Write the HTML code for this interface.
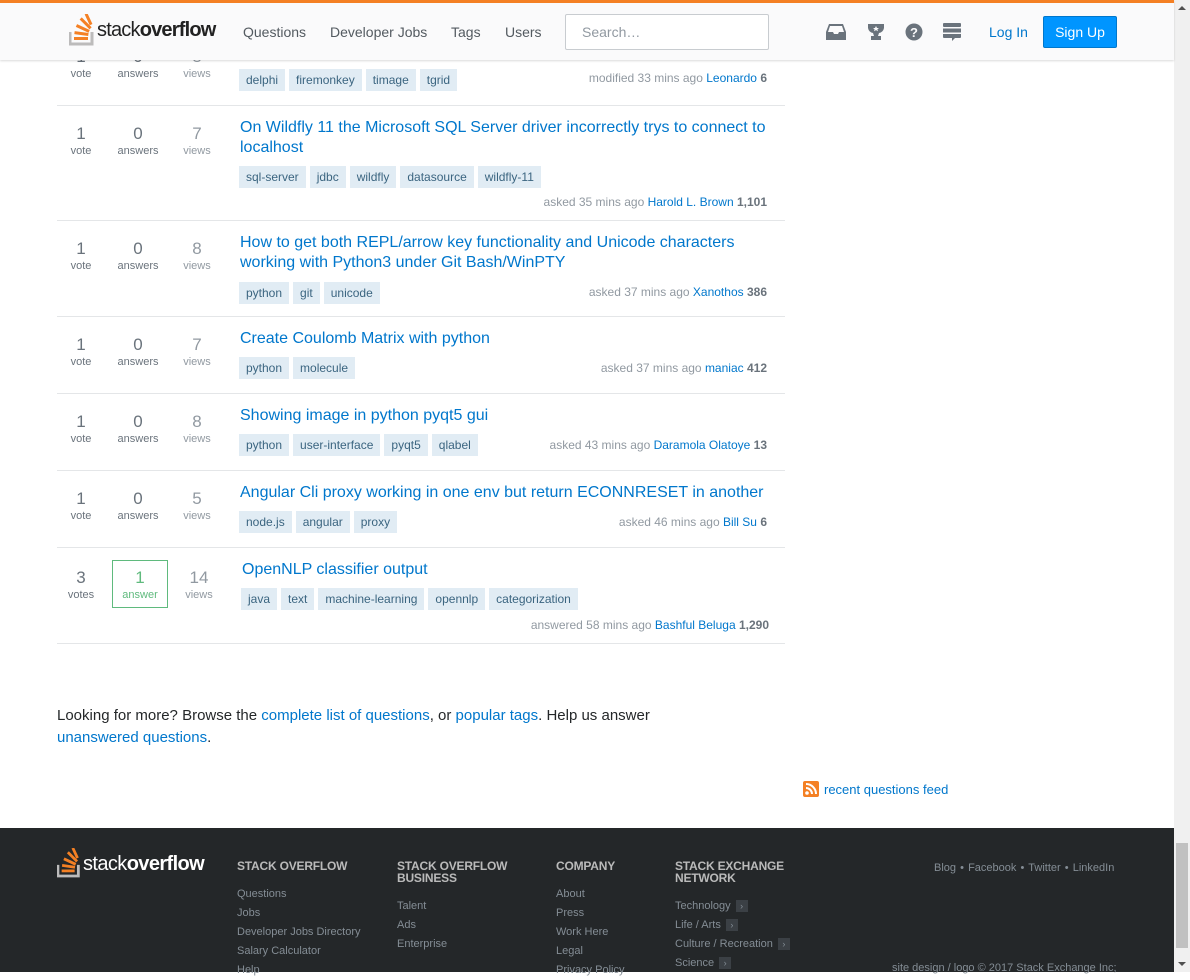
<!DOCTYPE html>
<html><head><meta charset="utf-8">
<style>
*{box-sizing:border-box;margin:0;padding:0}
body{width:1190px;height:972px;overflow:hidden;position:relative;background:#fff;font-family:"Liberation Sans",Arial,sans-serif;color:#242729}
a{color:#0077cc;text-decoration:none}
.abs{position:absolute}
.hdr{position:absolute;left:0;top:0;width:1174px;height:60px;background:#fafafb;border-top:3px solid #f48024;box-shadow:0 1px 2px rgba(0,0,0,.15);z-index:5}
.nav{position:absolute;top:21px;font-size:14px;color:#535a60}
.sb{position:absolute;right:0;top:0;width:16px;height:972px;background:#f0f0f0}
.row{position:absolute;left:57px;width:728px;border-bottom:1px solid #e4e6e8}
.st{position:absolute;text-align:center;width:60px}
.st .n{font-size:17px;color:#6a737c;line-height:20px}
.st .l{font-size:11px;color:#6a737c;line-height:14px}
.st.v .n,.st.v .l{color:#9199a1}
.t{position:absolute;left:183px;width:545px;font-size:16px;line-height:20px;color:#0077cc}
.tags{position:absolute;left:182px;height:22px;white-space:nowrap}
.tag{display:inline-block;height:22px;line-height:22px;padding:0 7px;margin-right:4px;background:#e1ecf4;color:#3b6580;font-size:12px}
.m{position:absolute;right:18px;font-size:12px;color:#9199a1;line-height:16px;white-space:nowrap}
.m b{color:#6a737c}
.foot{position:absolute;left:0;top:828px;width:1174px;height:144px;background:#242729}
.fh{position:absolute;font-size:12px;font-weight:bold;color:#bababa;line-height:12px;letter-spacing:-.2px}
.fl{position:absolute;font-size:11px;color:#848d95;line-height:19px}
.chev{display:inline-block;width:12px;height:12px;background:#3b4045;color:#848d95;font-size:9px;line-height:12px;text-align:center;margin-left:5px;vertical-align:middle}
</style></head><body>

<div class="row" style="top:30px;height:76px">
  <div class="st" style="left:-6px;top:17px"><div class="n">1</div><div class="l">vote</div></div>
  <div class="st" style="left:51px;top:17px"><div class="n">0</div><div class="l">answers</div></div>
  <div class="st v" style="left:110px;top:17px"><div class="n">8</div><div class="l">views</div></div>
  <div class="tags" style="top:39px"><span class="tag">delphi</span><span class="tag">firemonkey</span><span class="tag">timage</span><span class="tag">tgrid</span></div>
  <div class="m" style="top:40px">modified 33 mins ago <a>Leonardo</a> <b>6</b></div>
</div>

<div class="row" style="top:105px;height:116px">
  <div class="st" style="left:-6px;top:19px"><div class="n">1</div><div class="l">vote</div></div>
  <div class="st" style="left:51px;top:19px"><div class="n">0</div><div class="l">answers</div></div>
  <div class="st v" style="left:110px;top:19px"><div class="n">7</div><div class="l">views</div></div>
  <div class="t" style="top:13px">On Wildfly 11 the Microsoft SQL Server driver incorrectly trys to connect to localhost</div>
  <div class="tags" style="top:61px"><span class="tag">sql-server</span><span class="tag">jdbc</span><span class="tag">wildfly</span><span class="tag">datasource</span><span class="tag">wildfly-11</span></div>
  <div class="m" style="top:89px">asked 35 mins ago <a>Harold L. Brown</a> <b>1,101</b></div>
</div>

<div class="row" style="top:220px;height:97px">
  <div class="st" style="left:-6px;top:19px"><div class="n">1</div><div class="l">vote</div></div>
  <div class="st" style="left:51px;top:19px"><div class="n">0</div><div class="l">answers</div></div>
  <div class="st v" style="left:110px;top:19px"><div class="n">8</div><div class="l">views</div></div>
  <div class="t" style="top:13px">How to get both REPL/arrow key functionality and Unicode characters working with Python3 under Git Bash/WinPTY</div>
  <div class="tags" style="top:62px"><span class="tag">python</span><span class="tag">git</span><span class="tag">unicode</span></div>
  <div class="m" style="top:64px">asked 37 mins ago <a>Xanothos</a> <b>386</b></div>
</div>

<div class="row" style="top:316px;height:78px">
  <div class="st" style="left:-6px;top:19px"><div class="n">1</div><div class="l">vote</div></div>
  <div class="st" style="left:51px;top:19px"><div class="n">0</div><div class="l">answers</div></div>
  <div class="st v" style="left:110px;top:19px"><div class="n">7</div><div class="l">views</div></div>
  <div class="t" style="top:13px">Create Coulomb Matrix with python</div>
  <div class="tags" style="top:41px"><span class="tag">python</span><span class="tag">molecule</span></div>
  <div class="m" style="top:44px">asked 37 mins ago <a>maniac</a> <b>412</b></div>
</div>

<div class="row" style="top:393px;height:78px">
  <div class="st" style="left:-6px;top:19px"><div class="n">1</div><div class="l">vote</div></div>
  <div class="st" style="left:51px;top:19px"><div class="n">0</div><div class="l">answers</div></div>
  <div class="st v" style="left:110px;top:19px"><div class="n">8</div><div class="l">views</div></div>
  <div class="t" style="top:13px">Showing image in python pyqt5 gui</div>
  <div class="tags" style="top:41px"><span class="tag">python</span><span class="tag">user-interface</span><span class="tag">pyqt5</span><span class="tag">qlabel</span></div>
  <div class="m" style="top:44px">asked 43 mins ago <a>Daramola Olatoye</a> <b>13</b></div>
</div>

<div class="row" style="top:470px;height:78px">
  <div class="st" style="left:-6px;top:19px"><div class="n">1</div><div class="l">vote</div></div>
  <div class="st" style="left:51px;top:19px"><div class="n">0</div><div class="l">answers</div></div>
  <div class="st v" style="left:110px;top:19px"><div class="n">5</div><div class="l">views</div></div>
  <div class="t" style="top:13px">Angular Cli proxy working in one env but return ECONNRESET in another</div>
  <div class="tags" style="top:41px"><span class="tag">node.js</span><span class="tag">angular</span><span class="tag">proxy</span></div>
  <div class="m" style="top:44px">asked 46 mins ago <a>Bill Su</a> <b>6</b></div>
</div>

<div class="row" style="top:547px;height:97px">
  <div class="st" style="left:-6px;top:21px"><div class="n">3</div><div class="l">votes</div></div>
  <div class="st" style="left:55px;top:13px;width:56px;height:48px;border:1px solid #5fba7d;padding-top:7px"><div class="n" style="color:#5fba7d">1</div><div class="l" style="color:#5fba7d">answer</div></div>
  <div class="st v" style="left:112px;top:21px"><div class="n">14</div><div class="l">views</div></div>
  <div class="t" style="top:13px;left:185px">OpenNLP classifier output</div>
  <div class="tags" style="top:41px;left:184px"><span class="tag">java</span><span class="tag">text</span><span class="tag">machine-learning</span><span class="tag">opennlp</span><span class="tag">categorization</span></div>
  <div class="m" style="top:70px;right:16px">answered 58 mins ago <a>Bashful Beluga</a> <b>1,290</b></div>
</div>

<div class="abs" style="left:57px;top:705px;width:640px;font-size:15px;line-height:22px">Looking for more? Browse the <a>complete list of questions</a>, or <a>popular tags</a>. Help us answer <a>unanswered questions</a>.</div>

<div class="abs" style="left:803px;top:781px;width:16px;height:16px;background:#f48024;border-radius:2px">
<svg width="16" height="16" viewBox="0 0 16 16"><circle cx="4" cy="12" r="1.8" fill="#fff"/><path d="M3 7a6 6 0 0 1 6 6M3 3a10 10 0 0 1 10 10" stroke="#fff" stroke-width="2" fill="none"/></svg></div>
<a class="abs" style="left:824px;top:782px;font-size:13px">recent questions feed</a>

<div class="hdr">
  <svg class="abs" style="left:69px;top:11px" width="28" height="32" viewBox="0 0 28 32">
    <path d="M1 18v12h22V18" stroke="#bcbbbb" stroke-width="3" fill="none"/>
    <g fill="#f48024"><rect x="5" y="23" width="14" height="3"/><rect x="5.5" y="18" width="14" height="3" transform="rotate(8 12 19)"/><rect x="7" y="13" width="14" height="3" transform="rotate(25 14 14)"/><rect x="10" y="8" width="14" height="3" transform="rotate(45 17 9)"/><rect x="14" y="4" width="12" height="3" transform="rotate(65 20 5)"/></g>
  </svg>
  <div class="abs" style="left:97px;top:16px;font-size:20px;color:#222;letter-spacing:-.8px">stack<b>overflow</b></div>
  <div class="nav" style="left:243px">Questions</div>
  <div class="nav" style="left:330px">Developer Jobs</div>
  <div class="nav" style="left:451px">Tags</div>
  <div class="nav" style="left:505px">Users</div>
  <div class="abs" style="left:565px;top:11px;width:204px;height:36px;border:1px solid #c8ccd0;border-radius:2px;background:#fff;font-size:14px;color:#9199a1;padding:9px 0 0 16px">Search…</div>
  <svg class="abs" style="left:826px;top:20px" width="20" height="18" viewBox="0 0 20 18"><path d="M3 1h14l3 8v8H0V9z" fill="#6a737c"/><path d="M4 3h12l2 6h-5l-1 2H8L7 9H2z" fill="#fafafb"/></svg>
  <svg class="abs" style="left:866px;top:20px" width="20" height="18" viewBox="0 0 20 18"><path d="M2 1h16v4a6 6 0 0 1-5 5l-1 3h3v4H5v-4h3l-1-3a6 6 0 0 1-5-5z" fill="#6a737c"/><path d="M10 3l1 2h2l-1.6 1.3.6 2-2-1.2-2 1.2.6-2L7 5h2z" fill="#fafafb"/></svg>
  <svg class="abs" style="left:905px;top:20px" width="18" height="18" viewBox="0 0 18 18"><circle cx="9" cy="9" r="8.5" fill="#6a737c"/><text x="9" y="14" text-anchor="middle" font-size="13" font-weight="bold" fill="#fafafb" font-family="Liberation Sans">?</text></svg>
  <svg class="abs" style="left:943px;top:20px" width="18" height="20" viewBox="0 0 18 20"><rect x="0" y="0" width="18" height="4" rx="1" fill="#6a737c"/><rect x="0" y="5.5" width="18" height="4" fill="#6a737c"/><path d="M0 11h18v3a1 1 0 0 1-1 1h-5l-3 3v-3H1a1 1 0 0 1-1-1z" fill="#6a737c"/></svg>
  <a class="abs" style="left:989px;top:21px;font-size:14px">Log In</a>
  <div class="abs" style="left:1043px;top:13px;width:74px;height:32px;background:#0095ff;border:1px solid #07c;border-radius:2px;color:#fff;font-size:14px;text-align:center;line-height:30px">Sign Up</div>
</div>

<div class="foot">
  <svg class="abs" style="left:57px;top:20px" width="26" height="30" viewBox="0 0 28 32">
    <path d="M1 18v12h22V18" stroke="#bcbbbb" stroke-width="3" fill="none"/>
    <g fill="#f48024"><rect x="5" y="23" width="14" height="3"/><rect x="5.5" y="18" width="14" height="3" transform="rotate(8 12 19)"/><rect x="7" y="13" width="14" height="3" transform="rotate(25 14 14)"/><rect x="10" y="8" width="14" height="3" transform="rotate(45 17 9)"/><rect x="14" y="4" width="12" height="3" transform="rotate(65 20 5)"/></g>
  </svg>
  <div class="abs" style="left:83px;top:25px;font-size:20px;color:#fff;letter-spacing:-.6px">stack<b>overflow</b></div>
  <div class="fh" style="left:237px;top:32px">STACK OVERFLOW</div>
  <div class="fl" style="left:237px;top:57px">Questions<br>Jobs<br>Developer Jobs Directory<br>Salary Calculator<br>Help</div>
  <div class="fh" style="left:397px;top:32px">STACK OVERFLOW<br>BUSINESS</div>
  <div class="fl" style="left:397px;top:69px">Talent<br>Ads<br>Enterprise</div>
  <div class="fh" style="left:556px;top:32px">COMPANY</div>
  <div class="fl" style="left:556px;top:57px">About<br>Press<br>Work Here<br>Legal<br>Privacy Policy</div>
  <div class="fh" style="left:675px;top:32px">STACK EXCHANGE<br>NETWORK</div>
  <div class="fl" style="left:675px;top:69px">Technology<span class="chev">›</span><br>Life / Arts<span class="chev">›</span><br>Culture / Recreation<span class="chev">›</span><br>Science<span class="chev">›</span></div>
  <div class="abs" style="left:934px;top:34px;font-size:11px;color:#848d95;word-spacing:-1px">Blog &nbsp;•&nbsp; Facebook &nbsp;•&nbsp; Twitter &nbsp;•&nbsp; LinkedIn</div>
  <div class="abs" style="left:892px;top:134px;font-size:11px;color:#848d95">site design / logo © 2017 Stack Exchange Inc;</div>
</div>

<div class="sb">
  <div class="abs" style="left:4px;top:6px;width:0;height:0;border-left:4px solid transparent;border-right:4px solid transparent;border-bottom:4px solid #505050"></div>
  <div class="abs" style="left:2px;top:843px;width:12px;height:105px;background:#c1c1c1"></div>
  <div class="abs" style="left:4px;top:962px;width:0;height:0;border-left:4px solid transparent;border-right:4px solid transparent;border-top:4px solid #505050"></div>
</div>
</body></html>
